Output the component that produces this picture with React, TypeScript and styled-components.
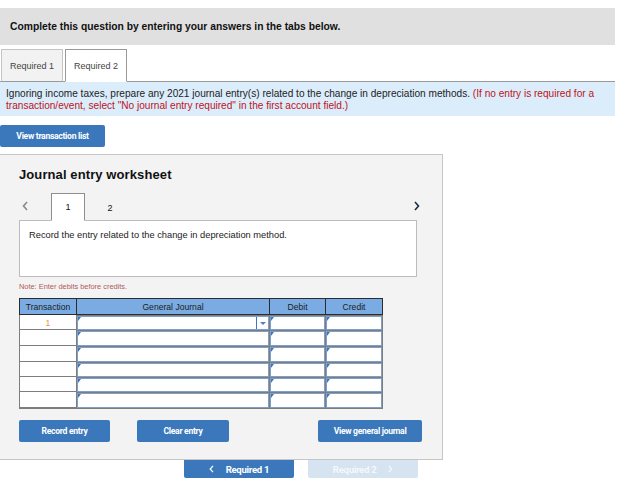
import React from "react";
import styled, { createGlobalStyle } from "styled-components";

const Global = createGlobalStyle`
  html, body { margin: 0; padding: 0; background: #fff; }
  body { font-family: "Liberation Sans", Arial, sans-serif; color: #222; }
  * { box-sizing: border-box; }
`;

const Page = styled.div`
  width: 619px;
  padding-top: 8px;
`;

const HeaderBand = styled.div`
  width: 615px;
  height: 37px;
  background: #e0e0e0;
  display: flex;
  align-items: center;
  padding-left: 10px;
  font-size: 10.3px;
  font-weight: bold;
  color: #111;
`;

const TabsRow = styled.div`
  margin-top: 4px;
  width: 615px;
  height: 33px;
  display: flex;
  align-items: flex-end;
  gap: 2px;
  padding-left: 1px;
  border-bottom: 1px solid #9a9a9a;
`;

const Tab = styled.div<{ $active?: boolean }>`
  width: 62px;
  height: 33px;
  margin-bottom: -1px;
  display: flex;
  align-items: center;
  justify-content: center;
  font-size: 9px;
  color: #444;
  background: ${(p) => (p.$active ? "#fff" : "#f2f2f2")};
  border: 1px solid ${(p) => (p.$active ? "#999" : "#c4c4c4")};
  border-bottom: ${(p) => (p.$active ? "1px solid #fff" : "1px solid #9a9a9a")};
`;

const InfoBand = styled.div`
  width: 615px;
  height: 34px;
  background: #dbedfa;
  padding: 6px 6px 0 6px;
  font-size: 10.1px;
  line-height: 12px;
  color: #222;
`;

const Red = styled.span`
  color: #c0121a;
`;

const BlueButton = styled.button<{ $w: number }>`
  width: ${(p) => p.$w}px;
  height: 22px;
  background: #3a77bb;
  border: none;
  border-radius: 2px;
  color: #fff;
  font-family: Roboto, "Liberation Sans", sans-serif;
  font-weight: bold;
  font-size: 8.6px;
  letter-spacing: -0.3px;
  padding: 0;
  display: flex;
  align-items: center;
  justify-content: center;
`;

const TopButtonRow = styled.div`
  margin-top: 9px;
  display: flex;
`;

const Panel = styled.div`
  margin-top: 7px;
  width: 443px;
  height: 306px;
  background: #f3f3f3;
  border: 1px solid #c6c6c6;
  border-left: none;
  padding: 0 0 0 19px;
  display: flex;
  flex-direction: column;
`;

const Title = styled.div`
  margin-top: 12px;
  height: 17px;
  font-size: 13px;
  font-weight: bold;
  color: #111;
  letter-spacing: 0.1px;
`;

const NavRow = styled.div`
  margin-top: 9px;
  width: 402px;
  height: 27px;
  display: flex;
  align-items: stretch;
`;

const Arrow = styled.div<{ $w: number }>`
  width: ${(p) => p.$w}px;
  display: flex;
  align-items: center;
  padding-left: 3px;
  padding-bottom: 2px;
`;

const NumTab = styled.div<{ $active?: boolean }>`
  width: 34px;
  margin-bottom: -1px;
  display: flex;
  align-items: center;
  justify-content: center;
  font-size: 9px;
  color: #111;
  background: ${(p) => (p.$active ? "#fff" : "transparent")};
  border: 1px solid ${(p) => (p.$active ? "#8e8e8e" : "transparent")};
  border-bottom: ${(p) => (p.$active ? "1px solid #fff" : "none")};
  position: relative;
  z-index: 1;
`;

const NavSpacer = styled.div`
  flex: 1;
`;

const Gap = styled.div<{ $w: number }>`
  width: ${(p) => p.$w}px;
  flex-shrink: 0;
`;

const DescBox = styled.div`
  width: 398px;
  height: 57px;
  background: #fff;
  border: 1px solid #bcbcbc;
  padding: 9px 0 0 9px;
  font-size: 9.3px;
  color: #222;
`;

const Note = styled.div`
  margin-top: 5px;
  font-size: 7.4px;
  color: #b05a5a;
  height: 10px;
`;

const Table = styled.div`
  margin-top: 6px;
  width: 364px;
  display: grid;
  grid-template-columns: 58px 193px 56px 57px;
  grid-template-rows: 17px 15px 16px 16px 15px 15px 16px;
  border-bottom: 1px solid #7d7d7d;
`;

const HeadCell = styled.div<{ $first?: boolean }>`
  background: #7aace3;
  border: 1px solid #2c2c2c;
  border-left-width: ${(p) => (p.$first ? 1 : 0)}px;
  display: flex;
  align-items: center;
  justify-content: center;
  font-size: 8.6px;
  color: #1c1c1c;
`;

const TransCell = styled.div`
  background: #fff;
  border: 1px solid #7d7d7d;
  border-top: none;
  border-bottom: none;
  box-shadow: inset 0 -1px 0 #7d7d7d;
  display: flex;
  align-items: center;
  justify-content: center;
  font-size: 8.6px;
  color: #e0993a;
`;

const InputCell = styled.div`
  background: #7d7d7d;
  padding: 1px 1px 0 0;
  display: flex;
  min-height: 0;
`;

const InputBox = styled.div`
  flex: 1;
  background: #fff;
  border: 1px solid #7f9fcb;
  position: relative;
  display: flex;
  justify-content: flex-end;
`;

const Corner = styled.div`
  position: absolute;
  left: 0;
  top: 0;
  width: 0;
  height: 0;
  border-top: 4px solid #3a77bb;
  border-right: 3px solid transparent;
`;

const DropPart = styled.div`
  width: 12px;
  border-left: 1px solid #3a77bb;
  display: flex;
  align-items: center;
  justify-content: center;
`;

const DropArrow = styled.div`
  width: 0;
  height: 0;
  border-left: 3px solid transparent;
  border-right: 3px solid transparent;
  border-top: 3px solid #5a7fb0;
`;

const ActionRow = styled.div`
  margin-top: 11px;
  display: flex;
  align-items: center;
`;

const BottomNav = styled.div`
  display: flex;
  padding-left: 184px;
  gap: 14px;
`;

const NavButton = styled.button<{ $disabled?: boolean }>`
  width: 110px;
  height: 18px;
  border: none;
  border-radius: 0 0 2px 2px;
  background: ${(p) => (p.$disabled ? "#d6e3f0" : "#3a77bb")};
  color: ${(p) => (p.$disabled ? "#f4f8fc" : "#fff")};
  font-family: Roboto, "Liberation Sans", sans-serif;
  font-weight: bold;
  font-size: 9.6px;
  letter-spacing: -0.3px;
  display: flex;
  align-items: center;
  justify-content: center;
  gap: 12px;
  padding: 0;
`;

const Chevron = ({ dir, color, size = 8 }: { dir: "l" | "r"; color: string; size?: number }) => (
  <svg width={size * 0.6} height={size} viewBox="0 0 6 10">
    <path
      d={dir === "l" ? "M5 1 L1.5 5 L5 9" : "M1 1 L4.5 5 L1 9"}
      fill="none"
      stroke={color}
      strokeWidth={1.6}
    />
  </svg>
);

const rows = [0, 1, 2, 3, 4, 5];

export default function App() {
  return (
    <Page>
      <Global />
      <HeaderBand>Complete this question by entering your answers in the tabs below.</HeaderBand>
      <TabsRow>
        <Tab>Required 1</Tab>
        <Tab $active>Required 2</Tab>
      </TabsRow>
      <InfoBand>
        Ignoring income taxes, prepare any 2021 journal entry(s) related to the change in depreciation methods.{" "}
        <Red>(If no entry is required for a</Red>
        <br />
        <Red>transaction/event, select "No journal entry required" in the first account field.)</Red>
      </InfoBand>
      <TopButtonRow>
        <BlueButton $w={105}>View transaction list</BlueButton>
      </TopButtonRow>
      <Panel>
        <Title>Journal entry worksheet</Title>
        <NavRow>
          <Arrow $w={32}>
            <Chevron dir="l" color="#8a8a8a" size={10} />
          </Arrow>
          <NumTab $active>1</NumTab>
          <Gap $w={8} />
          <NumTab>2</NumTab>
          <NavSpacer />
          <Arrow $w={10}>
            <Chevron dir="r" color="#1a2a4a" size={10} />
          </Arrow>
        </NavRow>
        <DescBox>Record the entry related to the change in depreciation method.</DescBox>
        <Note>Note: Enter debits before credits.</Note>
        <Table>
          <HeadCell $first>Transaction</HeadCell>
          <HeadCell>General Journal</HeadCell>
          <HeadCell>Debit</HeadCell>
          <HeadCell>Credit</HeadCell>
          {rows.map((r) => (
            <React.Fragment key={r}>
              <TransCell>{r === 0 ? "1" : ""}</TransCell>
              {[0, 1, 2].map((c) => (
                <InputCell key={c}>
                  <InputBox>
                    <Corner />
                    {r === 0 && c === 0 && (
                      <DropPart>
                        <DropArrow />
                      </DropPart>
                    )}
                  </InputBox>
                </InputCell>
              ))}
            </React.Fragment>
          ))}
        </Table>
        <ActionRow>
          <BlueButton $w={91}>Record entry</BlueButton>
          <Gap $w={27} />
          <BlueButton $w={92}>Clear entry</BlueButton>
          <Gap $w={89} />
          <BlueButton $w={104}>View general journal</BlueButton>
        </ActionRow>
      </Panel>
      <BottomNav>
        <NavButton>
          <Chevron dir="l" color="#fff" size={8} />
          Required 1
        </NavButton>
        <NavButton $disabled>
          Required 2
          <Chevron dir="r" color="#f4f8fc" size={8} />
        </NavButton>
      </BottomNav>
    </Page>
  );
}
